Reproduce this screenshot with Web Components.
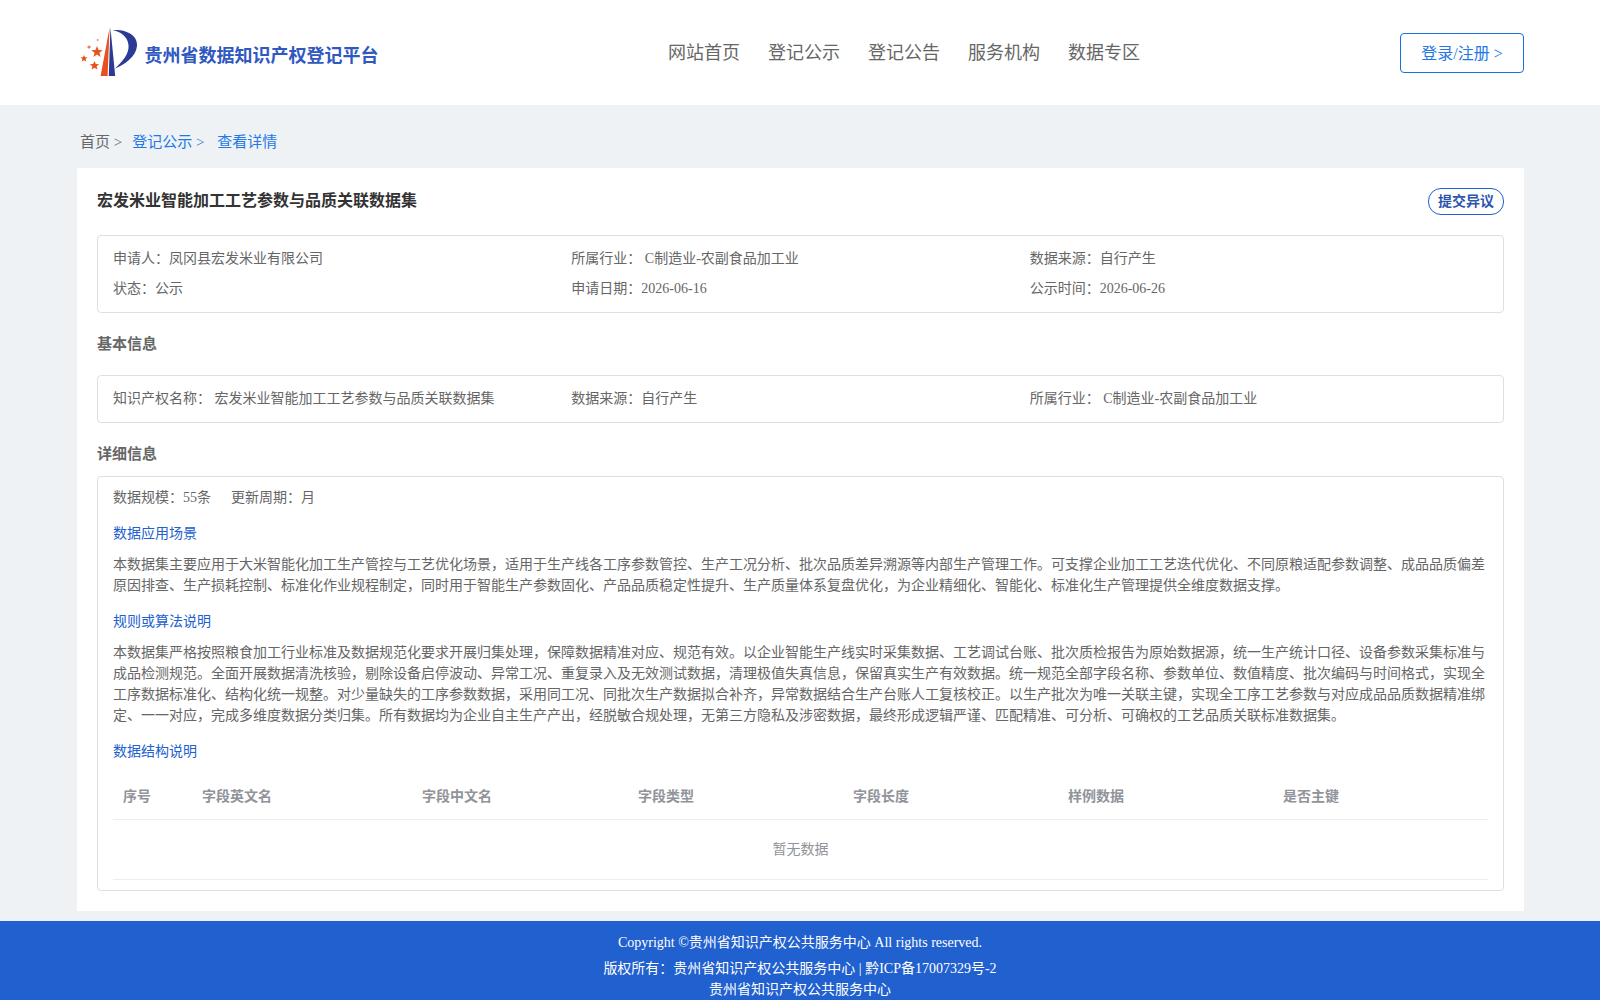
<!DOCTYPE html>
<html>
<head>
<meta charset="utf-8">
<title>贵州省数据知识产权登记平台</title>
<style>
  html { overflow: hidden; }
  body {
    margin: 0;
    background: #eff2f5;
    color: #666;
    font: 14px/21px "Liberation Serif", "Noto Sans CJK SC", serif;
  }
</style>
</head>
<body>
<site-header></site-header>
<page-crumbs></page-crumbs>
<detail-card heading="宏发米业智能加工工艺参数与品质关联数据集">
  <info-box>
    <span>申请人：凤冈县宏发米业有限公司</span>
    <span>所属行业： C制造业-农副食品加工业</span>
    <span>数据来源：自行产生</span>
    <span>状态：公示</span>
    <span>申请日期：2026-06-16</span>
    <span>公示时间：2026-06-26</span>
  </info-box>
  <section-title>基本信息</section-title>
  <info-box class="single">
    <span>知识产权名称： 宏发米业智能加工工艺参数与品质关联数据集</span>
    <span>数据来源：自行产生</span>
    <span>所属行业： C制造业-农副食品加工业</span>
  </info-box>
  <section-title class="detail">详细信息</section-title>
  <detail-box>
    <div>数据规模：55条<span style="margin-left:20px">更新周期：月</span></div>
    <detail-block heading="数据应用场景">本数据集主要应用于大米智能化加工生产管控与工艺优化场景，适用于生产线各工序参数管控、生产工况分析、批次品质差异溯源等内部生产管理工作。可支撑企业加工工艺迭代优化、不同原粮适配参数调整、成品品质偏差原因排查、生产损耗控制、标准化作业规程制定，同时用于智能生产参数固化、产品品质稳定性提升、生产质量体系复盘优化，为企业精细化、智能化、标准化生产管理提供全维度数据支撑。</detail-block>
    <detail-block heading="规则或算法说明">本数据集严格按照粮食加工行业标准及数据规范化要求开展归集处理，保障数据精准对应、规范有效。以企业智能生产线实时采集数据、工艺调试台账、批次质检报告为原始数据源，统一生产统计口径、设备参数采集标准与成品检测规范。全面开展数据清洗核验，剔除设备启停波动、异常工况、重复录入及无效测试数据，清理极值失真信息，保留真实生产有效数据。统一规范全部字段名称、参数单位、数值精度、批次编码与时间格式，实现全工序数据标准化、结构化统一规整。对少量缺失的工序参数数据，采用同工况、同批次生产数据拟合补齐，异常数据结合生产台账人工复核校正。以生产批次为唯一关联主键，实现全工序工艺参数与对应成品品质数据精准绑定、一一对应，完成多维度数据分类归集。所有数据均为企业自主生产产出，经脱敏合规处理，无第三方隐私及涉密数据，最终形成逻辑严谨、匹配精准、可分析、可确权的工艺品质关联标准数据集。</detail-block>
    <detail-block heading="数据结构说明"><field-table></field-table></detail-block>
  </detail-box>
</detail-card>
<site-footer></site-footer>

<script>
class SiteHeader extends HTMLElement {
  constructor() {
    super();
    this.attachShadow({ mode: 'open' });
    const links = ['网站首页', '登记公示', '登记公告', '服务机构', '数据专区'];
    this.shadowRoot.innerHTML = `
      <style>
        :host { display: block; background: #fff; height: 105px; }
        .bar { display: flex; align-items: flex-start; width: 1447px; margin-left: 77px; height: 105px; }
        .logo { display: flex; align-items: center; width: 591px; margin-top: 22px; height: 60px; }
        .logo svg { width: 70px; height: 60px; flex: none; margin-left: -1px; }
        .logo b { font-size: 18px; line-height: 24px; color: #2f58c0; margin-left: -1.5px; margin-top: 7px; }
        nav { display: flex; gap: 28px; font-size: 18px; line-height: 24px; padding-top: 41px; color: #666; }
        .login {
          box-sizing: border-box; width: 124px; height: 40px; margin: 33px 0 0 auto;
          border: 1px solid #1a6fe0; border-radius: 4px; color: #2478e6;
          font-size: 16px; line-height: 40px; text-align: center;
        }
      </style>
      <div class="bar">
        <div class="logo">
          <svg viewBox="0 0 70 60">
            <path d="M33.6 5.5 L24.6 54 L31.6 54 Z" fill="#e8501f"/>
            <path d="M34.4 5.5 L32.8 54 L39.2 54 Z" fill="#2b3a94"/>
            <path d="M36.5 8 C50 7 62 13 61 24 C60 35 48 43 39 46.5 C46 40 53.5 32 52.5 23 C51.5 14 44 9.5 36.5 8 Z" fill="#2b3a94"/>
            <path d="M21 24 L22.5 28 L26.8 28.2 L23.4 30.8 L24.6 35 L21 32.6 L17.4 35 L18.6 30.8 L15.2 28.2 L19.5 28 Z" fill="#e8501f"/>
            <path d="M18.5 39 L19.8 42 L23.2 42.2 L20.6 44.3 L21.5 47.5 L18.5 45.7 L15.5 47.5 L16.4 44.3 L13.8 42.2 L17.2 42 Z" fill="#e8501f"/>
            <path d="M8 33 L9 35.3 L11.5 35.5 L9.6 37.1 L10.2 39.5 L8 38.2 L5.8 39.5 L6.4 37.1 L4.5 35.5 L7 35.3 Z" fill="#e8501f"/>
            <circle cx="13" cy="25" r="1.6" fill="#ee7a50"/>
            <circle cx="21.7" cy="18" r="1.1" fill="#f0906c"/>
          </svg>
          <b>贵州省数据知识产权登记平台</b>
        </div>
        <nav>${links.map(l => `<span>${l}</span>`).join('')}</nav>
        <div class="login">登录/注册 &gt;</div>
      </div>`;
  }
}

class PageCrumbs extends HTMLElement {
  constructor() {
    super();
    this.attachShadow({ mode: 'open' });
    this.shadowRoot.innerHTML = `
      <style>
        :host { display: block; width: 1447px; margin-left: 77px; box-sizing: border-box; height: 63px; padding: 27px 0 0 3px; font-size: 15px; line-height: 21px; }
        a { color: #2478e6; }
        span { margin-right: 10px; }
        a.cur { margin-left: 9px; }
      </style>
      <span>首页 &gt;</span><a>登记公示 &gt;</a> <a class="cur">查看详情</a>`;
  }
}

class DetailCard extends HTMLElement {
  constructor() {
    super();
    this.attachShadow({ mode: 'open' });
    this.shadowRoot.innerHTML = `
      <style>
        :host { display: block; box-sizing: border-box; width: 1447px; margin: 0 0 10px 77px; height: 743px; background: #fff; padding: 20px; }
        .top { display: flex; justify-content: space-between; height: 26px; margin-bottom: 21px; }
        h1 { margin: 0; font-size: 16px; line-height: 26px; font-weight: bold; color: #333; }
        .objection {
          box-sizing: border-box; width: 76px; height: 27px; border: 1px solid #2060cf; border-radius: 13px;
          color: #2c56ad; font-size: 14px; font-weight: bold; line-height: 25px; text-align: center;
        }
      </style>
      <div class="top"><h1>${this.getAttribute('heading')}</h1><div class="objection">提交异议</div></div>
      <slot></slot>`;
  }
}

class InfoBox extends HTMLElement {
  constructor() {
    super();
    this.attachShadow({ mode: 'open' });
    this.shadowRoot.innerHTML = `
      <style>
        :host { display: block; border: 1px solid #dcdfe6; border-radius: 4px; padding: 8px 15px; }
        .grid { display: grid; grid-template-columns: repeat(3, 1fr); grid-auto-rows: 30px; align-items: center; }
        ::slotted(span) { line-height: 30px; }
      </style>
      <div class="grid"><slot></slot></div>`;
  }
}

class SectionTitle extends HTMLElement {
  constructor() {
    super();
    this.attachShadow({ mode: 'open' });
    this.shadowRoot.innerHTML = `
      <style>
        :host { display: block; margin: 21px 0; font-size: 15px; font-weight: bold; line-height: 20px; color: #666; }
        :host(.detail) { margin: 21px 0 12px; }
      </style>
      <slot></slot>`;
  }
}

class DetailBox extends HTMLElement {
  constructor() {
    super();
    this.attachShadow({ mode: 'open' });
    this.shadowRoot.innerHTML = `
      <style>
        :host { display: block; border: 1px solid #dcdfe6; border-radius: 4px; padding: 10px 15px; }
      </style>
      <slot></slot>`;
  }
}

class DetailBlock extends HTMLElement {
  constructor() {
    super();
    this.attachShadow({ mode: 'open' });
    this.shadowRoot.innerHTML = `
      <style>
        :host { display: block; margin-top: 15px; }
        h3 { margin: 0 0 10px; font-size: 14px; font-weight: normal; line-height: 21px; color: #2060cf; }
      </style>
      <h3>${this.getAttribute('heading')}</h3>
      <slot></slot>`;
  }
}

class FieldTable extends HTMLElement {
  constructor() {
    super();
    this.attachShadow({ mode: 'open' });
    const cols = ['序号', '字段英文名', '字段中文名', '字段类型', '字段长度', '样例数据', '是否主键'];
    this.shadowRoot.innerHTML = `
      <style>
        :host { display: block; color: #909399; }
        .head { display: grid; grid-template-columns: 80px 220px repeat(5, 215px); box-sizing: content-box; height: 45px; padding-top: 2px; border-bottom: 1px solid #ebeef5; align-items: center; font-weight: bold; }
        .head span { padding-left: 10px; }
        .head span:nth-child(2), .head span:nth-child(3) { margin-left: -1px; }
        .empty { height: 59px; line-height: 59px; text-align: center; border-bottom: 1px solid #ebeef5; }
      </style>
      <div class="head">${cols.map(c => `<span>${c}</span>`).join('')}</div>
      <div class="empty">暂无数据</div>`;
  }
}

class SiteFooter extends HTMLElement {
  constructor() {
    super();
    this.attachShadow({ mode: 'open' });
    this.shadowRoot.innerHTML = `
      <style>
        :host { display: block; background: #2060cf; color: #fff; text-align: center; padding-top: 11px; font-size: 14px; line-height: 21px; }
        p { margin: 0; }
        .copy { margin-bottom: 5px; }
      </style>
      <p class="copy">Copyright ©贵州省知识产权公共服务中心 All rights reserved.</p>
      <p>版权所有：贵州省知识产权公共服务中心 | 黔ICP备17007329号-2</p>
      <p>贵州省知识产权公共服务中心</p>`;
  }
}

customElements.define('site-header', SiteHeader);
customElements.define('page-crumbs', PageCrumbs);
customElements.define('detail-card', DetailCard);
customElements.define('info-box', InfoBox);
customElements.define('section-title', SectionTitle);
customElements.define('detail-box', DetailBox);
customElements.define('detail-block', DetailBlock);
customElements.define('field-table', FieldTable);
customElements.define('site-footer', SiteFooter);
</script>
</body>
</html>
